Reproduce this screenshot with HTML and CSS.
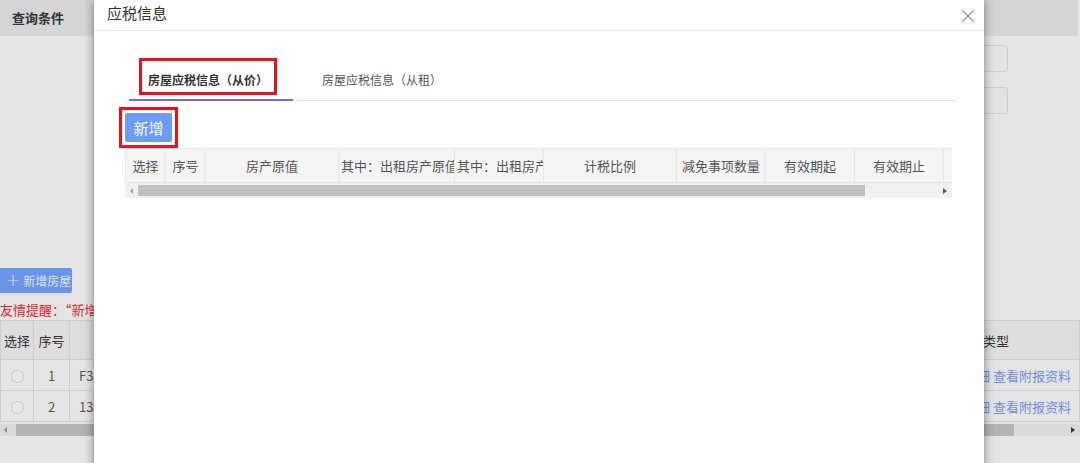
FILE: index.html
```html
<!DOCTYPE html>
<html lang="zh-CN">
<head>
    <meta charset="UTF-8">
    <title>应税信息</title>
    <link rel="stylesheet" href="styles.css">
</head>
<body>

<div class="page">
    <div class="query-bar">查询条件</div>
    <div class="query-form">
        <input type="text" class="query-input">
        <input type="text" class="query-input">
    </div>

    <div class="house-tools">
        <button class="btn-add-house"><span class="plus">+</span>新增房屋</button>
        <p class="tip">友情提醒：“新增房屋”后请录入应税信息</p>
    </div>

    <table class="house-table">
        <colgroup>
            <col style="width: 33px">
            <col style="width: 36px">
            <col>
            <col style="width: 160px">
        </colgroup>
        <thead>
            <tr>
                <th>选择</th>
                <th>序号</th>
                <th>房屋编号</th>
                <th class="type-head">附报类型</th>
            </tr>
        </thead>
        <tbody>
            <tr>
                <td><span class="radio"></span></td>
                <td>1</td>
                <td class="left">F33010600012</td>
                <td class="links"><a href="#">查看明细</a> <a href="#">查看附报资料</a></td>
            </tr>
            <tr>
                <td><span class="radio"></span></td>
                <td>2</td>
                <td class="left">13301060021</td>
                <td class="links"><a href="#">查看明细</a> <a href="#">查看附报资料</a></td>
            </tr>
        </tbody>
    </table>
    <div class="page-scroll">
        <span class="arrow-left"></span>
        <div class="page-scroll-track"><div class="page-scroll-thumb"></div></div>
        <span class="arrow-right"></span>
    </div>
</div>

<!-- 应税信息弹窗 -->
<div class="modal">
    <div class="modal-head">
        <span class="modal-title">应税信息</span>
        <span class="modal-close">
            <svg width="12" height="12" viewBox="0 0 12 12"><path d="M0.5 0.5L11.5 11.5M11.5 0.5L0.5 11.5" stroke="#9a9a9a" stroke-width="1.1" fill="none"/></svg>
        </span>
    </div>
    <div class="modal-body">
        <div class="tabs">
            <div class="tab active"><span class="tab-label marked">房屋应税信息（从价）</span></div>
            <div class="tab"><span class="tab-label">房屋应税信息（从租）</span></div>
        </div>

        <div class="toolbar">
            <span class="marked-btn"><button class="btn-new">新增</button></span>
        </div>

        <div class="grid">
            <table class="grid-table">
                <colgroup>
                    <col style="width: 40px">
                    <col style="width: 40px">
                    <col style="width: 133px">
                    <col style="width: 116px">
                    <col style="width: 89px">
                    <col style="width: 133px">
                    <col style="width: 89px">
                    <col style="width: 89px">
                    <col style="width: 89px">
                    <col style="width: 89px">
                </colgroup>
                <thead>
                    <tr>
                        <th>选择</th>
                        <th>序号</th>
                        <th>房产原值</th>
                        <th>其中：出租房产原值</th>
                        <th>其中：出租房产租金收入</th>
                        <th>计税比例</th>
                        <th>减免事项数量</th>
                        <th>有效期起</th>
                        <th>有效期止</th>
                        <th>操作</th>
                    </tr>
                </thead>
            </table>
            <div class="grid-scroll">
                <span class="arrow-left"></span>
                <div class="grid-scroll-track"><div class="grid-scroll-thumb"></div></div>
                <span class="arrow-right"></span>
            </div>
        </div>
    </div>
</div>

</body>
</html>
```

FILE: styles.css
```css
body {
    margin: 0;
    background-color: #e5e5e5;
    font-family: "Noto Sans CJK SC", "Liberation Sans", sans-serif;
    font-size: 13px;
    color: #444;
    overflow: hidden;
    height: 463px;
}

/* background page */
.page {
    width: 1080px;
}

.query-bar {
    height: 36px;
    line-height: 36px;
    margin-right: 2px;
    padding-left: 12px;
    background-color: #d5d5d5;
    font-weight: bold;
    color: #333;
}

.query-form {
    display: flex;
    flex-direction: column;
    align-items: flex-end;
    gap: 15px;
    padding: 9px 72px 0 0;
}

.query-input {
    width: 220px;
    height: 27px;
    box-sizing: border-box;
    border: 1px solid #cfcfcf;
    border-radius: 3px;
    background-color: #e3e3e3;
}

.house-tools {
    margin-top: 154px;
}

.btn-add-house {
    display: flex;
    align-items: center;
    height: 25px;
    width: 72px;
    padding: 0 0 0 6px;
    border: none;
    border-radius: 0 2px 2px 0;
    background-color: #6a94e8;
    color: #d8e3fa;
    font-family: inherit;
    font-size: 12px;
}

.btn-add-house .plus {
    font-size: 17px;
    line-height: 1;
    margin-right: 3px;
    font-family: "DejaVu Sans", sans-serif;
    font-weight: 300;
}

.tip {
    margin: 8px 0 1px;
    line-height: 18px;
    color: #e6262c;
}

.house-table {
    width: 100%;
    table-layout: fixed;
    border-collapse: collapse;
}

.house-table th,
.house-table td {
    border: 1px solid #cdcdcd;
    text-align: center;
    white-space: nowrap;
    overflow: hidden;
    padding: 0;
    font-weight: normal;
}

.house-table th {
    height: 38px;
    background-color: #dedede;
    color: #333;
}

.house-table td {
    height: 30px;
    color: #555;
}

.house-table .left {
    text-align: left;
    padding-left: 9px;
}

.house-table .type-head {
    text-align: left;
    padding-left: 37px;
}

.house-table .links {
    text-align: right;
    padding-right: 8px;
}

.links a {
    color: #6e8fe2;
    text-decoration: none;
}

.radio {
    display: inline-block;
    width: 11px;
    height: 11px;
    border: 1px solid #c6c6c6;
    border-radius: 50%;
    background-color: #e8e8e8;
    vertical-align: middle;
}

.page-scroll {
    display: flex;
    align-items: center;
    height: 12px;
    margin-top: 2px;
    background-color: #dadada;
}

.page-scroll-track {
    flex: 1;
    height: 12px;
    padding-left: 5px;
}

.page-scroll-thumb {
    width: 998px;
    height: 12px;
    background-color: #b3b3b3;
}

.arrow-left,
.arrow-right {
    width: 0;
    height: 0;
    border-top: 3px solid transparent;
    border-bottom: 3px solid transparent;
    margin: 0 4px;
}

.arrow-left {
    border-right: 3px solid #8a8a8a;
}

.arrow-right {
    border-left: 4px solid #333;
    margin-right: 5px;
}

/* modal */
.modal {
    position: absolute;
    top: 0;
    left: 94px;
    width: 890px;
    height: 480px;
    background-color: #fff;
    box-shadow: 0 0 10px rgba(0, 0, 0, 0.45);
}

.modal-head {
    display: flex;
    justify-content: space-between;
    align-items: center;
    height: 26px;
    padding: 0 10px 4px 13px;
    border-bottom: 1px solid #e9e9e9;
}

.modal-title {
    font-size: 15px;
    line-height: 26px;
    color: #333;
}

.modal-close {
    display: flex;
    margin-top: 5px;
}

.modal-body {
    padding: 27px 32px 0 31px;
}

.tabs {
    display: flex;
    gap: 10px;
    margin: 0 -5px 0 4px;
    border-bottom: 1px solid #e6e6e6;
}

.tab {
    padding: 0 16px 4px 10px;
    border-bottom: 2px solid transparent;
    margin-bottom: -1px;
}

.tab.active {
    border-bottom-color: #7468f0;
}

.tab-label {
    display: block;
    padding: 10px 6px 3px;
    border: 3px solid transparent;
    font-size: 12px;
    line-height: 18px;
    color: #555;
}

.tab.active .tab-label {
    font-weight: bold;
    color: #333;
}

.marked {
    border-color: #e8121e;
}

.toolbar {
    margin: 6px 0 0 -6px;
}

.marked-btn {
    display: inline-block;
    padding: 3px;
    border: 3px solid #e8121e;
    vertical-align: top;
}

.btn-new {
    display: block;
    width: 47px;
    height: 29px;
    border: none;
    border-radius: 2px;
    background-color: #6a9cf8;
    color: #fff;
    font-family: inherit;
    font-size: 15px;
    padding: 0;
}

.grid {
    width: 827px;
    overflow: hidden;
}

.grid-table {
    table-layout: fixed;
    width: 907px;
    border-collapse: collapse;
}

.grid-table th {
    height: 33px;
    padding: 0 2px;
    border: 1px solid #e6e6e6;
    background-color: #f5f5f5;
    font-weight: normal;
    color: #555;
    white-space: nowrap;
    overflow: hidden;
    text-align: center;
}

.grid-scroll {
    display: flex;
    align-items: center;
    height: 15px;
    background-color: #f1f1f1;
}

.grid-scroll-track {
    flex: 1;
    height: 11px;
    padding-left: 1px;
}

.grid-scroll-thumb {
    width: 727px;
    height: 11px;
    background-color: #c1c1c1;
}

.grid-scroll .arrow-left {
    border-right-color: #a3a3a3;
    margin: 0 4px 0 5px;
}

.grid-scroll .arrow-right {
    border-left-color: #555;
    margin: 0 5px 0 0;
}
```
